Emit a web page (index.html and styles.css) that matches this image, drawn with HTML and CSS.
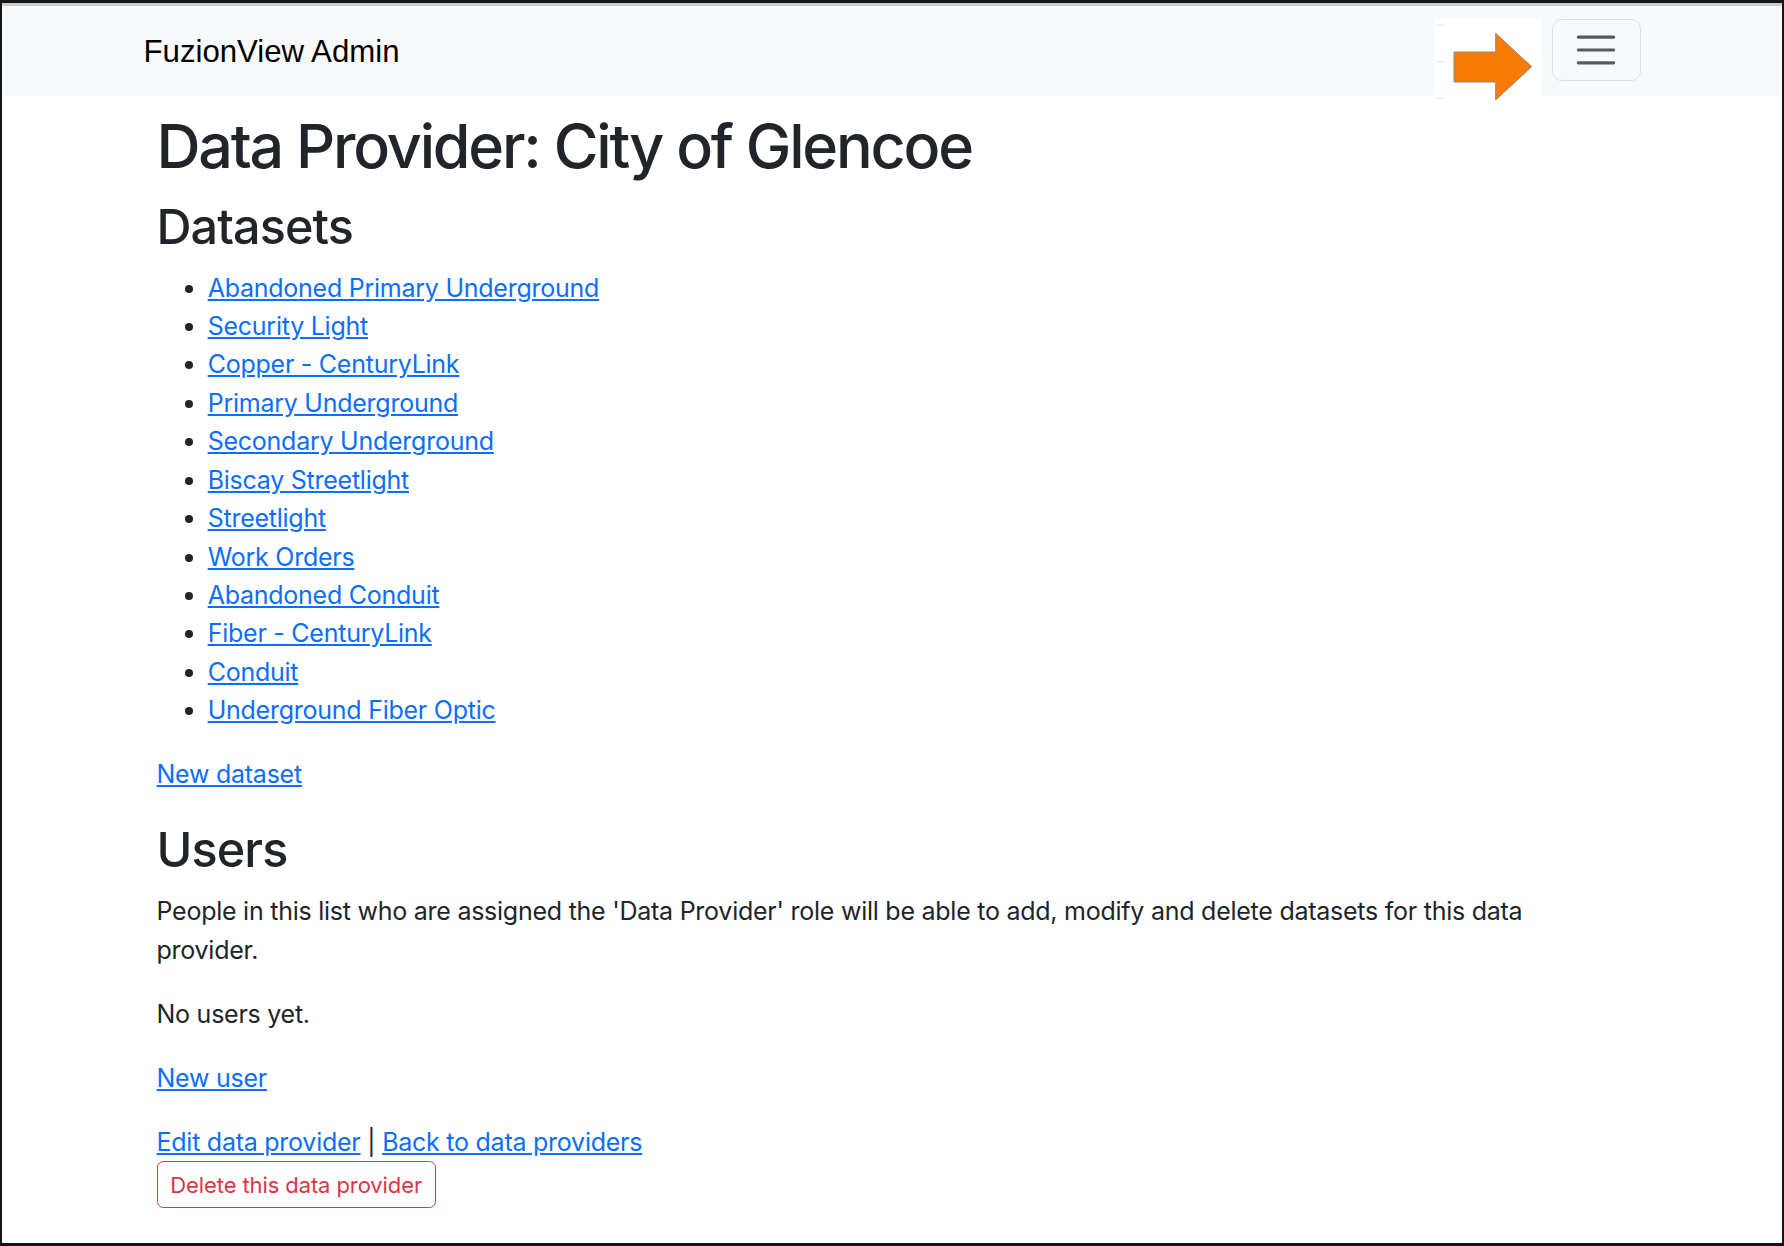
FILE: index.html
```html
<!DOCTYPE html>
<html lang="en">
<head>
<meta charset="utf-8">
<title>FuzionView Admin</title>
<link rel="stylesheet" href="styles.css">
</head>
<body>
<div class="frame">
  <div class="topline"></div>
  <nav class="navbar">
    <div class="nav-inner">
      <a class="brand" href="#">FuzionView Admin</a>
      <div class="toggler-wrap">
        <svg class="callout" width="108" height="82" viewBox="0 0 108 82" aria-hidden="true">
          <rect x="0" y="0" width="107" height="77" fill="#ffffff"/>
          <line x1="1" y1="6" x2="9" y2="6" stroke="#e2e2e2" stroke-width="1"/>
          <line x1="1" y1="42.7" x2="9" y2="42.7" stroke="#e2e2e2" stroke-width="1"/>
          <line x1="1" y1="79.3" x2="9" y2="79.3" stroke="#e2e2e2" stroke-width="1"/>
          <polygon points="19,33 60.7,33 60.7,14.3 96.7,47.7 60.7,81 60.7,63 19,63" fill="#f77b05" stroke="#8c8c8c" stroke-width="1"/>
        </svg>
        <button class="toggler" type="button" aria-label="Toggle navigation">
          <svg width="48" height="48" viewBox="0 0 30 30" aria-hidden="true">
            <path d="M4 7h22M4 15h22M4 23h22" stroke="rgba(33,37,41,0.75)" stroke-width="2" stroke-linecap="round" stroke-miterlimit="10"/>
          </svg>
        </button>
      </div>
    </div>
  </nav>
  <main class="container">
    <h1 class="page-title">Data Provider: City of Glencoe</h1>
    <h2 class="section-title datasets-title">Datasets</h2>
    <ul class="dataset-list">
      <li><a href="#">Abandoned Primary Underground</a></li>
      <li><a href="#">Security Light</a></li>
      <li><a href="#">Copper - CenturyLink</a></li>
      <li><a href="#">Primary Underground</a></li>
      <li><a href="#">Secondary Underground</a></li>
      <li><a href="#">Biscay Streetlight</a></li>
      <li><a href="#">Streetlight</a></li>
      <li><a href="#">Work Orders</a></li>
      <li><a href="#">Abandoned Conduit</a></li>
      <li><a href="#">Fiber - CenturyLink</a></li>
      <li><a href="#">Conduit</a></li>
      <li><a href="#">Underground Fiber Optic</a></li>
    </ul>
    <p class="para"><a href="#">New dataset</a></p>
    <h2 class="section-title users-title">Users</h2>
    <p class="para intro">People in this list who are assigned the 'Data Provider' role will be able to add, modify and delete datasets for this data provider.</p>
    <p class="para">No users yet.</p>
    <p class="para"><a href="#">New user</a></p>
    <div class="actions"><a href="#">Edit data provider</a> | <a href="#">Back to data providers</a></div>
    <button class="btn-delete" type="button">Delete this data provider</button>
  </main>
</div>
</body>
</html>
```

FILE: styles.css
```css
html, body {
  margin: 0;
  padding: 0;
  background: #ffffff;
}

body {
  font-family: Inter, "Noto Sans", "Liberation Sans", sans-serif;
  color: #212529;
  font-size: 25px;
  line-height: 38.4px;
  letter-spacing: -0.25px;
}

.frame {
  box-sizing: border-box;
  height: 1246px;
  border: 3px solid #161616;
  border-left-width: 2px;
  border-right-width: 2px;
  overflow: hidden;
}

.topline {
  height: 3px;
  background: #cbcccd;
}

.navbar {
  height: 90px;
  background: #f8f9fa;
}

.nav-inner {
  width: 1497px;
  height: 100%;
  margin: 0 auto;
  display: flex;
  align-items: center;
  justify-content: space-between;
}

.brand {
  font-family: "Liberation Sans", Arial, sans-serif;
  font-size: 31.2px;
  line-height: 46px;
  letter-spacing: 0;
  color: #000000;
  text-decoration: none;
  margin-top: 2px;
}

.toggler-wrap {
  position: relative;
  align-self: flex-start;
  margin-top: 13px;
}

.callout {
  position: absolute;
  right: calc(100% + 9px);
  top: 0;
  display: block;
  overflow: visible;
}

.toggler {
  box-sizing: border-box;
  width: 89px;
  height: 62.4px;
  padding: 0;
  margin: 0;
  display: flex;
  align-items: center;
  justify-content: center;
  background: transparent;
  border: 1.6px solid rgba(0, 0, 0, 0.1);
  border-radius: 9.6px;
}

.toggler svg {
  display: block;
}

.container {
  width: 1471px;
  margin: 0 auto;
  padding-top: 13.5px;
}

a {
  color: #0d6efd;
  text-decoration: underline;
  text-underline-offset: 2px;
}

.page-title {
  font-size: 61px;
  font-weight: 500;
  line-height: 1.2;
  letter-spacing: -2.2px;
  margin: 0 0 15.8px;
}

.section-title {
  font-size: 48.5px;
  font-weight: 500;
  line-height: 1.2;
  letter-spacing: -0.9px;
  margin: 0 0 14px;
}

.datasets-title {
  margin-bottom: 12px;
}

.users-title {
  padding-top: 2.3px;
  margin-bottom: 12.8px;
}

.dataset-list {
  margin: 0 0 25.6px;
  padding-left: 51.2px;
}

.para {
  margin: 0 0 25.6px;
}

.intro {
  max-width: 1455px;
}

.actions {
  margin: 0;
}

.btn-delete {
  box-sizing: border-box;
  height: 46.6px;
  display: inline-flex;
  align-items: center;
  padding: 0 12.8px;
  margin: 0;
  font-family: Inter, "Noto Sans", "Liberation Sans", sans-serif;
  font-size: 22px;
  letter-spacing: -0.1px;
  color: #dc3545;
  background: transparent;
  border: 1.6px solid #dc3545;
  border-radius: 6.4px;
}
```
